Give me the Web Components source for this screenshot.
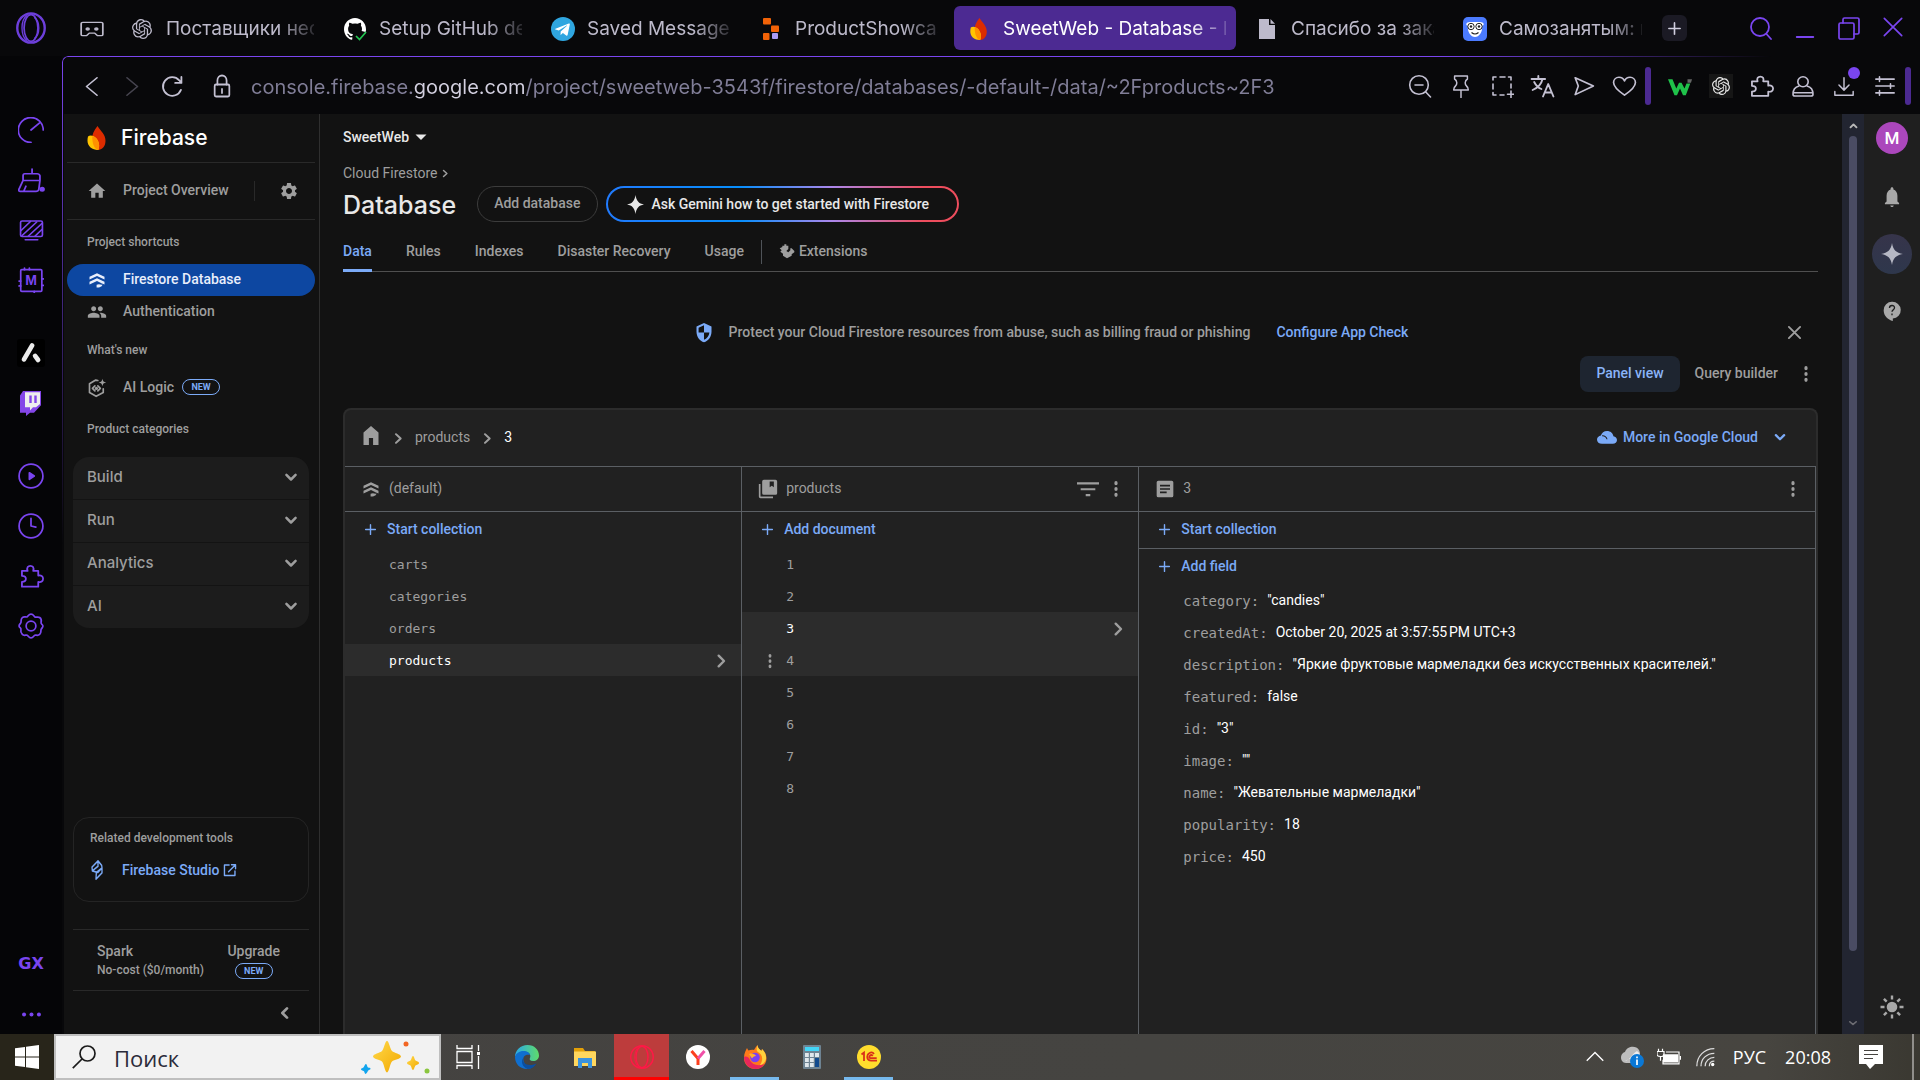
<!DOCTYPE html>
<html lang="ru">
<head>
<meta charset="utf-8">
<title>SweetWeb - Database - Data - Firebase console</title>
<style>
html,body{margin:0;height:100%;background:#08080a}
body{font-family:Roboto,"Liberation Sans",sans-serif;font-size:14px;color:#9e9e9e;overflow:hidden}
</style>
</head>
<body>
<browser-window></browser-window>
<script>
const OPENAI='<path fill="currentColor" d="M22.2819 9.8211a5.9847 5.9847 0 0 0-.5157-4.9108 6.0462 6.0462 0 0 0-6.5098-2.9A6.0651 6.0651 0 0 0 4.9807 4.1818a5.9847 5.9847 0 0 0-3.9977 2.9 6.0462 6.0462 0 0 0 .7427 7.0966 5.98 5.98 0 0 0 .511 4.9107 6.051 6.051 0 0 0 6.5146 2.9001A5.9847 5.9847 0 0 0 13.2599 24a6.0557 6.0557 0 0 0 5.7718-4.2058 5.9894 5.9894 0 0 0 3.9977-2.9001 6.0557 6.0557 0 0 0-.7475-7.0729zm-9.022 12.6081a4.4755 4.4755 0 0 1-2.8764-1.0408l.1419-.0804 4.7783-2.7582a.7948.7948 0 0 0 .3927-.6813v-6.7369l2.02 1.1686a.071.071 0 0 1 .038.052v5.5826a4.504 4.504 0 0 1-4.4945 4.4944zm-9.6607-4.1254a4.4708 4.4708 0 0 1-.5346-3.0137l.142.0852 4.783 2.7582a.7712.7712 0 0 0 .7806 0l5.8428-3.3685v2.3324a.0804.0804 0 0 1-.0332.0615L9.74 19.9502a4.4992 4.4992 0 0 1-6.1408-1.6464zM2.3408 7.8956a4.485 4.485 0 0 1 2.3655-1.9728V11.6a.7664.7664 0 0 0 .3879.6765l5.8144 3.3543-2.0201 1.1685a.0757.0757 0 0 1-.071 0l-4.8303-2.7865A4.504 4.504 0 0 1 2.3408 7.872zm16.5963 3.8558L13.1038 8.364 15.1192 7.2a.0757.0757 0 0 1 .071 0l4.8303 2.7913a4.4944 4.4944 0 0 1-.6765 8.1042v-5.6772a.79.79 0 0 0-.407-.667zm2.0107-3.0231l-.142-.0852-4.7735-2.7818a.7759.7759 0 0 0-.7854 0L9.409 9.2297V6.8974a.0662.0662 0 0 1 .0284-.0615l4.8303-2.7866a4.4992 4.4992 0 0 1 6.6802 4.66zM8.3065 12.863l-2.02-1.1638a.0804.0804 0 0 1-.038-.0567V6.0742a4.4992 4.4992 0 0 1 7.3757-3.4537l-.142.0805L8.704 5.459a.7948.7948 0 0 0-.3927.6813zm1.0976-2.3654l2.602-1.4998 2.6069 1.4998v2.9994l-2.5974 1.4997-2.6067-1.4997Z"/>';
const line=(d,w=1.6)=>`<g fill="none" stroke="currentColor" stroke-width="${w}" stroke-linecap="round" stroke-linejoin="round">${d}</g>`;
const solid=d=>`<path fill="currentColor" fill-rule="evenodd" d="${d}"/>`;
const PUZZLE='<path d="M4 7h4.500C7.500 4 9 2.500 11 2.500s3.500 1.500 2.500 4.500H18v4.200c2.500-.8 4.300.6 4.300 2.800s-1.800 3.600-4.300 2.800V21H3.500v-4.200c2.500 0 3.500-1.200 3.500-2.700s-1-2.700-3.500-2.700V7z"/>';
const FLAME='<path fill="#dd2c00" d="M12.500 1C9 5 7 9 7 13c0 6 2 10 6 10s7.500-3 7.500-8.500C20.500 9 16 6 12.500 1z"/><path fill="#ffc400" d="M3 10.500C5 9 9 9.500 11.500 12.500s3.500 7 1.700 10.500C7 23 2.500 19.500 2.500 14.500c0-1.500.1-2.800.5-4z"/><path fill="#ff9100" d="M7.300 10.300c1.700.3 3 1.100 4.200 2.200 2.500 3 3.500 7 1.700 10.500C9.500 22 7.200 18 7.300 10.300z"/>';
const FIRESTORE=solid('M3 8.200 12 4l9 4.200v3.300l-9-4.200-9 4.200zM3 14.200 12 10l9 4.200v3.300l-3-1.400-6-2.800-9 4.200zM11.500 21v-3.200c2-1.200 4-.9 5.800-.1l1.200-.4c0 2.500-3.500 3.700-7 3.700z');
const ICONS={
opera:'<g fill="none" stroke="#6d3fdb"><ellipse cx="12" cy="12" rx="10.300" ry="11" stroke-width="1.800"/><ellipse cx="12" cy="12" rx="5.200" ry="10" stroke-width="1.300"/><path d="M9 2.500C4 6 4 18 9 21.500M14.500 4c4.500 3 4.500 13 0 16" stroke-width="1"/></g>',
mask:line('<path d="M3.500 4h17q1.500 0 1.500 1.500v13q0 1.500-1.500 1.500H17l-2.500-3h-5L7 20H3.500Q2 20 2 18.500v-13Q2 4 3.500 4z"/><circle cx="8" cy="12" r="1.300" fill="currentColor"/><circle cx="16" cy="12" r="1.300" fill="currentColor"/>'),
openai:OPENAI,
github:'<path fill="#fff" d="M12 1C5.900 1 1 6 1 12.200c0 5 3.200 9.200 7.500 10.600.6.100.8-.2.800-.5v-2C6.200 21 5.600 19 5.600 19c-.5-1.300-1.200-1.600-1.200-1.600-1-.7.100-.7.100-.7 1.100.1 1.700 1.100 1.700 1.100 1 1.700 2.600 1.200 3.200.9.100-.7.400-1.200.7-1.500-2.500-.3-5-1.200-5-5.500 0-1.200.4-2.200 1.100-3-.1-.3-.5-1.500.1-3 0 0 .9-.3 3 1.100a10 10 0 0 1 5.500 0c2.100-1.400 3-1.100 3-1.100.6 1.500.2 2.700.1 3 .7.800 1.100 1.800 1.100 3 0 1-.1 1.700-.4 2.400l4 1c.3-1 .4-1.900.4-2.900C23 6 18.100 1 12 1z"/><path d="m13 19 3.500 3.500L23 15" fill="none" stroke="#23c552" stroke-width="1.700"/>',
telegram:'<circle cx="12" cy="12" r="12" fill="#2fa6e0"/><path fill="#fff" d="M4.500 11.700 17.800 6.500c.7-.2 1.200.2 1 1.100l-2.200 10.300c-.2.800-.7 1-1.400.6l-3.300-2.500-1.700 1.600c-.2.200-.4.300-.7.300l.2-3.400 6.300-5.700c.3-.3-.1-.4-.4-.2L7.800 13.500l-3.300-1c-.7-.2-.7-.6 0-.8z"/>',
replit:'<rect x="4" y="1" width="8" height="6.500" rx="1" fill="#f26207"/><rect x="12" y="8.500" width="8" height="6.500" rx="1" fill="#f26207"/><rect x="4" y="16" width="6.500" height="7" rx="1" fill="#f26207"/><rect x="13" y="16" width="6" height="6" rx="1" fill="#a99af5"/>',
flame:FLAME,
doc:'<path fill="#bdbacb" d="M4 2h10v6h6v14H4z"/><path fill="#bdbacb" d="m15.500 2 4.500 4.800h-4.500z"/>',
robot:'<rect width="24" height="24" rx="5" fill="#4b7bff"/><path fill="#fff" d="M5 9c-3-1-2-4 2-4h10c4 0 5 3 2 4 1 6-3 11-7 11S4 15 5 9z"/><circle cx="8" cy="9.500" r="3.200" fill="#fff" stroke="#222"/><circle cx="16" cy="9.500" r="3.200" fill="#fff" stroke="#222"/><circle cx="8" cy="9.500" r="1.200" fill="#222"/><circle cx="16" cy="9.500" r="1.200" fill="#222"/><path d="M8.500 15.500q3.500 3 7 0" fill="none" stroke="#222" stroke-width="1.200"/>',
plus:line('<path d="M12 3v18M3 12h18"/>',2.600),
search:line('<circle cx="11" cy="11" r="9"/><path d="m17.500 18 4.500 5"/>',1.800),
min:line('<path d="M2 21h20"/>',2),
restore:line('<rect x="2" y="7" width="15" height="16" rx="1.500"/><path d="M6 7V3.500Q6 2 7.500 2h13Q22 2 22 3.500v13q0 1.500-1.500 1.500H17"/>',1.700),
close:line('<path d="M2.500 2.500l19 19M21.500 2.500l-19 19"/>',1.800),
dismiss:line('<path d="M3 3l18 18M21 3 3 21"/>',3),
back:line('<path d="M17.500 2 6 12l11.500 10"/>',1.800),
fwd:line('<path d="M6.500 2 18 12 6.500 22"/>',1.800),
reload:line('<path d="M20.800 15.500A9.700 9.700 0 1 1 19 5.500l2 2.500M21.300 2v6.300h-6.500"/>',1.900),
lock:line('<rect x="4" y="10.500" width="16" height="12" rx="1.500"/><path d="M7 10.500V6.500a5 5 0 0 1 10 0v4M12 15v4"/>',1.900),
zoomout:line('<circle cx="11" cy="11" r="9.300"/><path d="m17.800 18 4.700 5M7 11h8"/>'),
pin:line('<path d="M5 2h14v3c-3 2-3 5-1 7 2 1.500 2 2.500 2 4H4c0-1.500 0-2.500 2-4 2-2 2-5-1-7zM12 16v7.500"/>'),
select:line('<path d="M3 6V3h3M10 3h5M18.500 3H21v3M21 10v4M3 10v5M3 18.500V21h3M10 21h4M21 17v6.500M17.500 20.300h6"/>'),
translate:line('<path d="M1.500 5h13M8 2v3M12 5c-1 5-5 9-9.500 11M4 8c2 4 4 6 7 7M12.500 22.500 17.500 10l5 12.500M14.300 18.500h6.500"/>',1.800),
send:line('<path d="M4 3 21.500 12 4 21.500l3-9.500z"/>'),
heart:line('<path d="M12 22C6 17.500 1.500 13 1.500 8.300 1.500 4.500 4 2.500 6.700 2.500c2.500 0 4.300 1.500 5.300 4 1-2.500 2.800-4 5.300-4 2.700 0 5.200 2 5.200 5.800C22.500 13 18 17.500 12 22z"/>'),
w:'<path fill="#1fc24a" d="M0 4h4.500l3.800 11L11 8h2.500l3 7 2-6h3.800l-4.500 14h-2.800L12 15l-3 8H6.500z"/><path fill="#666" d="M19.500 4H24l-1 4h-3.500z"/>',
puzzle:line(PUZZLE),
person:line('<circle cx="12" cy="7" r="5.200"/><path d="M8 11.500C4 12.500 2 15.500 2 20q0 2 2 2h16q2 0 2-2c0-4.500-2-7.500-6-8.500"/><path d="M2.500 18.500h19"/>'),
download:line('<path d="M12 3v13M6.500 11l5.500 5.500 5.500-5.500M2 18v4h20v-4"/>'),
sliders:line('<path d="M2 4.500h20M2 12h20M2 19.500h20M6 2v5M18 9.500v5M6 17v5"/>',1.700),
speed:line('<path d="M12 23.500A11.500 11.500 0 1 1 23.300 12M12 12l8.500-7"/>'),
broom:line('<path d="M12.500 1v4.500M6 5.500h11q2 0 2.500 2V12h-15V7.500q0-2 1.500-2zM4.500 12 .8 20.500q-.5 2 1.200 2h14q2 0 2.500-2L19.500 12M7 17.500l-2 5"/><circle cx="21.500" cy="20.500" r="1.600" fill="currentColor"/>'),
display:line('<rect x="1.500" y="3" width="21" height="15.500" rx="1.500"/><path d="M6 21.800h12M2 12.500 11 3.500M3 17.500 17 4M9 18 22 5.500M15.500 18 22 11.500"/>'),
chip:line('<rect x="2.500" y="2.500" width="19.500" height="20" rx="1"/><path d="M6 1v1.500M10.500 1v1.500M1 13h1.500M1 17.500h1.500M22 11h1.500M22 17h1.500M15 22.500V24"/>')+'<text x="12" y="17" text-anchor="middle" font-family="Liberation Sans" font-weight="700" font-size="13" fill="currentColor">M</text>',
alogo:'<rect width="24" height="24" rx="2.500" fill="#000"/><g stroke="#ececec" stroke-width="4" stroke-linecap="round"><path d="M13 5.500 6 17.500"/><path d="m15.500 14.500 2.600 3.500"/></g>',
twitch:'<path fill="#8446e8" d="M4 1h18v13l-7 7h-4l-4 3v-3H1V5z"/><path fill="#eee" d="M6 2h15v11l-4 3h-3l-3 3v-3H6z"/><path stroke="#8446e8" stroke-width="2.400" d="M11.500 5v7M16.500 5v7"/>',
play:line('<circle cx="12" cy="12" r="11"/><path fill="currentColor" d="m10.500 9 4.500 3-4.500 3z"/>'),
clock:line('<circle cx="12" cy="12" r="11"/><path d="M12 5v7l4.500 1"/>'),
flower:line('<circle cx="12" cy="12" r="4.500"/><path d="M12 1c2 0 2.500 1.500 3.500 2.500S18.300 3 20 4.200s1.700 3 1.300 4.500 1.700 1.800 1.700 3.300-1.300 2-1.700 3.300.400 3-1.300 4.500-3.500.3-4.500.7S14 23 12 23s-2.500-2-3.500-2.500-3 .9-4.500-.700-1.700-3-1.300-4.500S1 13.500 1 12s1.300-2 1.700-3.300-.4-3 1.300-4.500 3.500 0 4.500-.7S10 1 12 1z"/>'),
dots:'<g fill="currentColor"><circle cx="3.500" cy="12" r="2.300"/><circle cx="12" cy="12" r="2.300"/><circle cx="20.500" cy="12" r="2.300"/></g>',
home:solid('M10 20v-6h4v6h5v-8h3L12 3 2 12h3v8z'),
homefull:solid('M3 20V7.500L12 1l9 6.500V20h-6.500v-7h-5v7z'),
gear:solid('M19.140 12.940c.04-.3.06-.61.06-.94 0-.32-.02-.64-.07-.94l2.030-1.580c.18-.14.23-.41.12-.61l-1.920-3.320c-.12-.22-.37-.29-.59-.22l-2.390.96c-.5-.38-1.030-.7-1.620-.94l-.36-2.540c-.04-.24-.24-.41-.48-.41h-3.840c-.24 0-.43.17-.47.41l-.36 2.540c-.59.24-1.130.57-1.620.94l-2.390-.96c-.22-.08-.47 0-.59.22L2.740 8.870c-.12.21-.08.47.12.61l2.030 1.580c-.05.3-.09.63-.09.94s.02.64.07.94l-2.030 1.580c-.18.14-.23.41-.12.61l1.920 3.320c.12.22.37.29.59.22l2.390-.96c.5.38 1.030.7 1.620.94l.36 2.540c.05.24.24.41.48.41h3.840c.24 0 .44-.17.47-.41l.36-2.540c.59-.24 1.130-.56 1.620-.94l2.390.96c.22.08.47 0 .59-.22l1.920-3.320c.12-.22.07-.47-.12-.61l-2.010-1.580zM12 15.600c-1.980 0-3.600-1.620-3.600-3.600s1.620-3.600 3.600-3.600 3.600 1.620 3.600 3.600-1.620 3.600-3.600 3.600z'),
firestore:FIRESTORE,
people:solid('M16 11c1.660 0 2.990-1.340 2.990-3S17.660 5 16 5c-1.660 0-3 1.340-3 3s1.340 3 3 3zm-8 0c1.660 0 2.990-1.340 2.990-3S9.660 5 8 5C6.340 5 5 6.340 5 8s1.340 3 3 3zm0 2c-2.330 0-7 1.170-7 3.500V19h14v-2.500c0-2.330-4.670-3.500-7-3.500zm8 0c-.29 0-.62.02-.97.05 1.160.84 1.970 1.970 1.970 3.450V19h6v-2.500c0-2.330-4.670-3.500-7-3.500z'),
ailogic:line('<path d="M13 3 10.500 2.500 3 7v10.500l8 4.500 8.500-4.500V13"/><path d="m9.500 9.500-3 3 3 3M13 9.500l3 3-3 3"/><circle cx="11.300" cy="12.500" r="1"/>',2)+solid('M18.500 1c.5 3 1.500 4 4.500 4.500-3 .5-4 1.500-4.500 4.500-.5-3-1.500-4-4.500-4.500 3-.5 4-1.500 4.500-4.500z'),
down:line('<path d="m6.500 9.500 5.500 5.500 5.500-5.500"/>',3),
left:line('<path d="m15 5-7 7 7 7"/>',4),
right:line('<path d="m8.500 4 8 8-8 8"/>',3.600),
studio:line('<path d="m13.500 1-9 7.500L5 13l8 2 6.500-5.500-.5-3zM5 13l8.500-5.500L13.500 1M10.500 23l9-7.500V9.500L11 15z"/>',2),
external:line('<path d="M10.500 3.500h-8v18h18v-8M14.500 3h7v7M21 3.500 9.500 15"/>',2.400),
caret:solid('M6.500 9.500h11l-5.500 5.500z'),
sparkle:solid('M12 0c1.200 7.500 4.500 10.800 12 12-7.500 1.200-10.800 4.500-12 12C10.800 16.500 7.500 13.200 0 12 7.500 10.800 10.800 7.500 12 0z'),
ext:solid('M5 4h3V2h3v2h3v5l-3 3 3 2 3-3V8h2l4 4v2l-4 3v2l-7 4-6-4v-3l-4-3 2-2-3-3 4-2z'),
shield:'<path fill="#7baaf7" fill-rule="evenodd" d="M12 1 3 5v6c0 5.550 3.840 10.740 9 12 5.160-1.260 9-6.450 9-12V5zM12 3.700 5.500 6.600v5.400H12zM12 12v8.300c3.500-1.300 6-4.400 6.500-8.300z"/>',
more:solid('M12 7.500a2.500 2.500 0 1 0 0-5 2.500 2.500 0 0 0 0 5zm0 7a2.500 2.500 0 1 0 0-5 2.500 2.500 0 0 0 0 5zm0 7a2.500 2.500 0 1 0 0-5 2.500 2.500 0 0 0 0 5z'),
cloud:solid('M6 21C2.500 21 0 18.500 0 15.500c0-2.700 2-5 4.700-5.400C5.500 6.500 8.400 4 12 4c4 0 7.300 3 7.700 7 2.500.4 4.300 2.400 4.300 5 0 2.800-2.200 5-5 5z')+'<path d="M6 10.500c3-.5 5.500 1.500 6 4.500" fill="none" stroke="#212121" stroke-width="1.300"/>',
album:solid('M3 6H1v15q0 2 2 2h15v-2H3zM7 1q-2 0-2 2v14q0 2 2 2h14q2 0 2-2V3q0-2-2-2zm7 2h5v7l-2.500-2-2.500 2z'),
note:solid('M4 2q-2 0-2 2v16q0 2 2 2h16q2 0 2-2V4q0-2-2-2zm2 5h12v2H6zm0 4h12v2H6zm0 4h8v2H6z'),
filter:solid('M0 4h24v2.600H0zm4 7h16v2.600H4zm5.500 7h5v2.600h-5z'),
bell:solid('M12 23c1.300 0 2-.7 2-1.700h-4c0 1 .7 1.700 2 1.700zm6.500-6v-6.500c0-3.500-2-6-4.800-6.800V3c0-1-.7-1.700-1.700-1.700s-1.700.7-1.700 1.700v.7c-2.800.8-4.800 3.300-4.800 6.800V17L3.500 18.500V20h17v-1.500z'),
help:'<path fill="currentColor" d="M12 1a10 10 0 1 1 1 20v3c-6-2-11-6-11-13A10 10 0 0 1 12 1z"/><path d="M9 8.500c0-4 6-4 6-.5 0 2.300-3 2.500-3 5M12 15v2" fill="none" stroke="#1e1e1e" stroke-width="1.600"/>',
sun:'<circle cx="12" cy="12" r="5.300" fill="currentColor"/><path stroke="currentColor" stroke-width="2.400" d="M12 .5v4M12 19.500v4M.5 12h4M19.500 12h4M3.900 3.900l2.800 2.800M17.300 17.300l2.800 2.800M3.900 20.100l2.800-2.800M17.300 6.700l2.800-2.800"/>',
up:line('<path d="m4 16 8-9 8 9"/>',5),
win:'<path fill="#fff" d="M0 3.300 10 2v9.500H0zM11 1.800 24 0v11.500H11zM0 12.500h10V22L0 20.700zM11 12.500h13V24l-13-1.800z"/>',
wsearch:'<g fill="none" stroke="#1b1b1b" stroke-width="1.700"><circle cx="15.500" cy="8.500" r="7.500"/><path d="M10 14 .8 23.200"/></g>',
stars:'<svg viewBox="0 0 70 34" width="70" height="34"><defs><linearGradient id="g" x1="0" x2="1" y1="0" y2="1"><stop offset="0" stop-color="#ffd84a"/><stop offset="1" stop-color="#f2a900"/></linearGradient></defs><path fill="url(#g)" d="M27 1c2 0 3 8 5 10s9 3 9 5.500-7 3-9 5-3 11-5 11-3-9-5-11-9-2.500-9-5 7-3.500 9-5.500 3-10 5-10z"/><path fill="url(#g)" d="M53 16c1.200 0 1.500 3.500 2.500 4.500s3.500 1 3.500 2.500-2.500 1.500-3.500 2.500-1.300 4.500-2.500 4.500-1.500-3.500-2.500-4.500-3.500-1-3.500-2.500 2.500-1.500 3.500-2.500 1.300-4.500 2.500-4.500z"/><path fill="#12a5ee" d="M6 24c1 0 1 3 2 3.500s2.500 0 2.500 1.300-2 1-2.500 2S6.500 34 5.500 34s-.8-2.500-1.800-3S1 30.500 1 29.300s2-1 2.700-2S5 24 6 24z"/><circle cx="46" cy="4" r="2.500" fill="#f26522"/><circle cx="67" cy="31" r="2.500" fill="#8bc63f"/></svg>',
taskview:'<g fill="none" stroke="#fff" stroke-width="1.300"><path d="M1 0v3.500h15V0M1 24v-3.500h15V24M1 6.500h15v11H1zM22.500 0v6M22.500 11v13"/></g><path fill="#fff" d="M21 7h3.200v3H21z"/>',
edge:'<defs><linearGradient id="e1" x1="0" x2="1"><stop offset="0" stop-color="#2aa8e8"/><stop offset="1" stop-color="#5fdc6a"/></linearGradient></defs><path fill="url(#e1)" d="M0 12C0 5 5.500 0 12.500 0S24 5 24 10.500c0 3.500-2.500 5.500-6 5.500-3 0-4-1.500-3-3 1.500-3.500-1.500-6.500-5.500-6.500S1.500 9 0 12z"/><path fill="#0f6fd0" d="M0 12c1-4 5-6.500 9.500-6 3 .3 5 2 5.500 4-5-1-7.500 2-6.500 6 1 4.500 5.500 6 11 4.500C17 23 14.500 24 12 24 5 24 0 19 0 12z"/><path fill="#0b4fa0" d="M8.500 12.500C7 18 12 22.500 21.500 18.500 19 22.500 16 24 12.500 24 7 22 5.500 16 8.500 12.500z"/>',
folder:'<path fill="#e3a008" d="M1 3h9l2 3H22v4H1z"/><path fill="#ffd75e" d="M1 6.500h22V21H1z"/><path fill="#3b93de" d="M5 13h14v10h-4v-5H9v5H5z"/>',
operared:'<g fill="none" stroke="#ff1846"><ellipse cx="12" cy="12" rx="11.300" ry="11.300" stroke-width="1.400"/><ellipse cx="12" cy="12" rx="6" ry="10.800" stroke-width="1.400"/><path d="M8.500 1.500c-5 5-5 16 0 21" stroke-width=".8"/></g>',
yandex:'<circle cx="12" cy="12" r="12" fill="#fff"/><path d="M5.500 6 12 13.500V20" fill="none" stroke="#fc3f1d" stroke-width="3"/><path d="M18.500 6 12 13.500" stroke="#f050a8" stroke-width="3"/>',
firefox:'<path fill="#ff7a1a" d="M1 13C1 8 3 5 4 3c.5 1 1 2 1.500 2.500C7 5 9 4.500 11 5c1-1.500 2-3.500 3.500-5 0 3 2 4 4 6l.5-2c3 3 4.500 6 4.500 9.500C23.500 19 19 24 12.500 24S1 19.500 1 13z"/><path fill="#ffd23c" d="M14.500 0c0 3 2 4 4 6l.5-2c3 3 4.500 6 4 10-1 4-4 6-6 6 4-6 2-11-2-13-2-1.500-1.500-4.500-.5-7z"/><path fill="#e8275b" d="M1 12c0 7 5 12 11.500 12 4 0 7-2 9-5-6 2.500-13 1-15-5-1-2-3-3-5.500-2z"/><circle cx="12" cy="12.500" r="4.800" fill="#7b3ff2"/><path fill="#ffb02e" d="M6 9c3-1 6 0 7 2-2 0-3 1-4 2.500z"/>',
calc:'<rect x="3" width="18" height="24" rx="1" fill="#6e8392"/><rect x="5" y="2" width="14" height="4" fill="#43d5f7"/><g fill="#dfe7ec"><path d="M5 8h3.800v4H5zM10 8h3.800v4H10zM15 8h4v4h-4zM5 13h3.800v4H5zM10 13h3.800v4H10zM5 18h3.800v4H5zM10 18h3.800v4H10z"/></g><path fill="#104a8e" d="M15 13h4v9h-4z"/>',
onec:'<circle cx="12" cy="12" r="12" fill="#ffdd2d"/><g fill="none" stroke="#d9301a" stroke-width="1.800"><path d="m4.500 9.500 2.500-2v8.500M17 9c-1-1.500-3-1.800-4.500-1-3 1.500-3 6 0 7.300 1 .5 3 .4 7.500.4M15.800 10.800c-.8-.8-2-1-2.800-.2-1 1-.7 2.600.7 2.600h6"/></g>',
tchev:'<path d="m3 16 9-9 9 9" fill="none" stroke="#fff" stroke-width="1.500"/>',
onedrive:'<path fill="#bdbdbd" d="M2 16c-2-3-1-8 3-9 2-6 11-7 14-2 2 4 1 8-4 13H6c-2 0-3-1-4-2z"/><path fill="#eee" d="M5 16c4 0 7-7 12-10 3 2 4 5 3 8H9z"/><circle cx="17" cy="16" r="7" fill="#0a78d6"/><path stroke="#fff" stroke-width="1.700" d="M17 14.500V20M17 11.500v1.700"/>',
battery:'<path fill="#fff" d="M6 9h15v9H6z"/><path fill="none" stroke="#fff" stroke-width="1.200" d="M9 6.500h13v13H6V15M23.500 11v4M1.500 3v3M5.500 3v3M0 6h7v3q0 2.500-3.500 2.500T0 9zM3.500 11v5"/>',
wifi:'<g fill="none" stroke="#ddd" stroke-width="1.500"><path d="M1 23C1 11 10 2 22 2M6 23C6 14 13 7.500 22 7.500M11 23c0-6 5-10.500 11-10.500M16 23c0-3.500 2-6 6-6"/></g><circle cx="20" cy="21" r="2" fill="#fff"/>',
notif:'<path fill="#fff" d="M0 0h24v19h-8l-5 5-4-5H0z"/><path d="M5 5.500h14M5 9.500h14M5 13.500h9" stroke="#454340" stroke-width="1.200"/>'
};
const element=(name,css,html)=>customElements.define(name,class extends HTMLElement{
  constructor(){super();this.attachShadow({mode:'open'})}
  connectedCallback(){
    const t=document.createElement('template');
    t.innerHTML=`<style>:host{display:block;box-sizing:border-box}*,*::before,*::after{box-sizing:border-box}button,input{font:inherit;color:inherit;background:none;border:0;padding:0;margin:0}a{color:inherit;text-decoration:none}ul,ol,dl,dd,h1,h2,p{margin:0;padding:0;list-style:none;font-weight:inherit;font-size:inherit}${css}</style>`+(typeof html==='function'?html(this):html);
    this.shadowRoot.replaceChildren(t.content.cloneNode(true));
  }
});
const a=(el,k,d='')=>el.getAttribute(k)??d;
const ic=(n,w=24,h=w)=>`<ui-icon name="${n}" w="${w}" h="${h}"></ui-icon>`;
const btn=(n,label,w=24,h=w)=>`<button aria-label="${label}">${ic(n,w,h)}</button>`;

element('ui-icon',':host{display:inline-flex;flex:none;vertical-align:middle}svg{display:block}',el=>{
  const n=a(el,'name');
  return n==='stars'?ICONS.stars:`<svg viewBox="0 0 24 24" preserveAspectRatio="none" width="${a(el,'w')}" height="${a(el,'h')}" aria-hidden="true">${ICONS[n]}</svg>`});

element('browser-tab',`
:host{flex:0 0 202px;min-width:0;height:44px;border-radius:6px;color:#bdbacb}
:host([first]){flex-basis:207px}
:host([active]){flex-basis:282px;background:#4c2a92;color:#fff}
button{width:100%;height:100%;display:flex;align-items:center;gap:12px;padding:1px 10px 0 13px;text-align:left}
i{width:24px;display:flex;justify-content:center}
span{flex:1;min-width:0;overflow:hidden;white-space:nowrap;mask-image:linear-gradient(90deg,#000 calc(100% - 36px),#0003);line-height:28px}`,
el=>`<button role="tab"><i>${ic(a(el,'icon'),a(el,'w','24'),a(el,'h','24'))}</i><span><slot></slot></span></button>`);

element('tab-strip',`
:host{display:flex;align-items:center;height:56px;font:19px/28px Inter,"Liberation Sans",sans-serif}
.logo{flex:none;width:62px;display:flex;justify-content:center}
.mask{flex:none;width:55px;display:flex;justify-content:center;padding:2px 0 0 5px;color:#bdbacb}
nav{display:flex;gap:6px}
.add{flex:none;width:25px;height:26px;border-radius:6px;background:#1b1a24;color:#d0cede;display:flex;align-items:center;justify-content:center;margin-left:10px}
.win{margin-left:auto;display:flex;gap:20px;color:#7a45f0;padding-right:15px}
.win button{width:24px;display:flex;justify-content:center}`,
`<button class="logo" aria-label="Opera GX">${ic('opera',32,32)}</button>
<button class="mask" aria-label="Workspace">${ic('mask',26,20)}</button>
<nav role="tablist">
<browser-tab first icon="openai" w="20" h="20">Поставщики нео</browser-tab>
<browser-tab icon="github">Setup GitHub de</browser-tab>
<browser-tab icon="telegram">Saved Messages</browser-tab>
<browser-tab icon="replit">ProductShowcas</browser-tab>
<browser-tab active icon="flame" w="22" h="24">SweetWeb - Database - D</browser-tab>
<browser-tab icon="doc">Спасибо за зака</browser-tab>
<browser-tab icon="robot">Самозанятым: к</browser-tab></nav>
<button class="add" aria-label="New tab">${ic('plus',15)}</button>
<div class="win">${btn('search','Search tabs',24)}${btn('min','Minimize',20,24)}${btn('restore','Restore',24)}${btn('close','Close',22)}</div>`);

element('address-bar',`
:host{display:flex;align-items:center;height:58px;padding-top:2px;color:#c4c1d3}
.nav{display:flex;padding-left:8px}
.nav button{width:40px;height:40px;display:flex;align-items:center;justify-content:center}
.nav .dim{color:#46444f}
.nav .lock{width:48px;margin-left:6px}
label{flex:1;display:flex}
input{flex:1;min-width:0;outline:0;padding:2px 0 0 5px;font:20px/28px Inter,"Liberation Sans",sans-serif;color:transparent;background:linear-gradient(90deg,#817e98 168px,#d3d0e0 168px,#d3d0e0 278px,#817e98 278px);background-clip:text;-webkit-background-clip:text}
.tools{display:flex;align-items:center;padding-right:9px}
.tools button{width:41px;height:40px;display:flex;align-items:center;justify-content:center;position:relative}
.bar{width:6px;height:38px;border-radius:3px;background:#4c2a92}
.bar+button{margin-left:8px}
.chip{background:#161616;width:24px;height:24px;display:flex;align-items:center;justify-content:center;color:#e6e6e6}
.badge{position:absolute;right:4px;top:1px;width:12px;height:12px;border-radius:6px;background:#7a45f0}`,
`<div class="nav">${btn('back','Back',22,21)}<button class="dim" aria-label="Forward">${ic('fwd',22,21)}</button>${btn('reload','Reload',23,23)}<button class="lock" aria-label="Site information">${ic('lock',22,24)}</button></div>
<label><input aria-label="Address" value="console.firebase.google.com/project/sweetweb-3543f/firestore/databases/-default-/data/~2Fproducts~2F3"></label>
<div class="tools">${btn('zoomout','Zoom')}${btn('pin','Pin',22,24)}${btn('select','Snapshot')}${btn('translate','Translate',25,24)}${btn('send','Send',25,22)}${btn('heart','Bookmark',25,22)}
<span class="bar"></span>${btn('w','Extension',24,20)}<button aria-label="ChatGPT"><span class="chip">${ic('openai',18)}</span></button>${btn('puzzle','Extensions',27,25)}${btn('person','Profile',24,23)}<button aria-label="Downloads">${ic('download',22,22)}<span class="badge"></span></button>${btn('sliders','Easy setup',22,22)}<span class="bar"></span></div>`);

element('gx-rail',`
:host{display:flex;flex-direction:column;width:62px;flex:none;color:#7a45f0;padding-top:54px;background:#050507}
div{display:flex;flex-direction:column;gap:10px;margin-bottom:33px}
button{height:40px;display:flex;align-items:center;justify-content:center}
div:last-child{margin:auto 0 0}
.gx{font:700 16px/20px "DejaVu Sans","Liberation Sans",sans-serif}`,
`<div>${btn('speed','Speed Dial',26)}${btn('broom','GX Cleaner',27,25)}${btn('display','Wallpaper',25,24)}${btn('chip','Mods',26)}</div>
<div>${btn('alogo','Aria',28)}${btn('twitch','Twitch',24,26)}</div>
<div>${btn('play','Player',26)}${btn('clock','History',26)}${btn('puzzle','Extensions',27,27)}${btn('flower','Settings',26)}</div>
<div><button class="gx">GX</button>${btn('dots','More',21)}</div>`);

element('new-badge',`:host{display:inline-flex;align-items:center;justify-content:center;width:38px;height:16px;border:1px solid #7baaf7;border-radius:8px;color:#7baaf7;font:700 9px/14px Roboto,sans-serif}`,'NEW');

element('nav-item',`
:host{height:32px}
a{height:32px;display:flex;align-items:center;padding:0 0 2px 20px;border-radius:16px;font-weight:500;line-height:20px}
i{display:flex;justify-content:center;width:20px;margin-right:16px;padding-top:2px}
:host([active]) a{background:#0d47a1;color:#e8eefb}
::slotted(new-badge){margin-left:8px}`,
el=>`<a href="#"><i>${ic(a(el,'icon'),a(el,'s','20'))}</i><slot></slot></a>`);

element('category-list',`
ul{background:#1c1c1c;border-radius:16px;overflow:hidden}
li+li{border-top:1px solid #131313}
button{width:100%;height:42px;display:flex;align-items:center;justify-content:space-between;padding:0 8px 2px 14px;font:500 15px/20px Inter,sans-serif}`,
()=>`<ul>${['Build','Run','Analytics','AI'].map(t=>`<li><button>${t}${ic('down',20)}</button></li>`).join('')}</ul>`);

element('firebase-sidebar',`
:host{width:256px;flex:none;border-right:1px solid #2f2f2f;background:#121212;display:flex;flex-direction:column;padding:0 4px 0 3px;font-size:14px;line-height:20px}
.brand{height:49px;display:flex;align-items:center;gap:12px;border-bottom:1px solid #292929;padding:0 0 1px 18px;color:#fff;font:500 21px/26px Inter,sans-serif}
.overview{height:57px;display:flex;align-items:center;border-bottom:1px solid #292929}
.overview nav-item{flex:1}
.overview button{border-left:1px solid #292929;height:20px;width:61px;padding-left:7px;display:flex;align-items:center;justify-content:center}
h2{font-size:12px;font-weight:500;line-height:44px;padding-left:20px}
h2.cat{line-height:50px}
category-list,.tools,.plan,.foot{margin:0 6px}
category-list{margin-top:3px}
.tools{margin-top:auto;height:85px;border:1px solid #242424;border-radius:16px;padding:10px 15px;font-size:12px;display:flex;flex-direction:column;gap:12px}
.tools p{padding-left:1px;font-weight:500}
.tools a{color:#7baaf7;font-weight:500;font-size:14px;display:flex;align-items:center;gap:3px}
.tools a ui-icon:first-child{margin-right:14px}
.plan{margin-top:27px;height:62px;border:solid #292929;border-width:1px 0;display:flex;justify-content:space-between;padding:11px 29px 0 24px;font-size:12px;font-weight:500}
.plan b{font-weight:500;font-size:14px;display:block}
.plan p{line-height:18px}
.up{display:flex;flex-direction:column;align-items:center;gap:2px}
.up b{line-height:20px}
.foot{height:43px;display:flex;justify-content:flex-end;padding-right:16px}
.foot button{display:flex;align-items:center}`,
`<div class="brand">${ic('flame',24,26)}Firebase</div>
<div class="overview"><nav-item icon="home">Project Overview</nav-item><button aria-label="Settings">${ic('gear',20)}</button></div>
<h2>Project shortcuts</h2>
<nav-item active icon="firestore">Firestore Database</nav-item><nav-item icon="people" s="20">Authentication</nav-item>
<h2>What's new</h2><nav-item icon="ailogic">AI Logic<new-badge></new-badge></nav-item>
<h2 class="cat">Product categories</h2><category-list></category-list>
<div class="tools"><p>Related development tools</p><a href="#">${ic('studio',16,20)}Firebase Studio${ic('external',14)}</a></div>
<div class="plan"><div><b>Spark</b><p>No-cost ($0/month)</p></div><div class="up"><b>Upgrade</b><new-badge></new-badge></div></div>
<div class="foot"><button aria-label="Collapse">${ic('left',16)}</button></div>`);

element('link-action',`:host{display:block}button{display:flex;align-items:center;height:35px;color:#7baaf7;font-weight:500;line-height:20px;padding:0 0 1px 19px;gap:10px}`,
()=>`<button>${ic('plus',13)}<slot></slot></button>`);

element('panel-column',`
:host{display:flex;flex-direction:column;min-width:0;border-right:1px solid #5b5f64}
header{height:45px;display:flex;align-items:center;border-bottom:1px solid #5b5f64;padding:0 14px 1px 16px}
h2{flex:1;margin-left:8px;padding-bottom:1px;font-size:14px;line-height:20px}
header button{display:flex;justify-content:center;width:16px}
header button:first-of-type:not(:last-of-type){width:22px;margin-right:9px}`,
el=>`<header>${ic(a(el,'icon'),a(el,'s','20'))}<h2>${a(el,'heading')}</h2>${el.hasAttribute('filter')?btn('filter','Filter',22,20):''}${el.hasAttribute('menu')?btn('more','Menu',16,20):''}</header><slot></slot>`);

element('list-row',`
:host{font:13px/20px "DejaVu Sans Mono","Liberation Mono",monospace}
button{width:100%;height:32px;display:flex;align-items:center;padding:2px 12px 0 16px;text-align:left}
i{width:28px;display:flex;padding-left:5px}
span{flex:1}
:host([on]),:host([hover]){background:#2c2c2c}
:host([on]) span{color:#fff}`,
el=>`<button><i>${el.hasAttribute('hover')?ic('more',14,18):''}</i><span><slot></slot></span>${el.hasAttribute('on')?ic('right',16,16):''}</button>`);

element('doc-fields',`
dl{display:grid}
div{display:flex;height:32px;align-items:center;padding-left:44px;white-space:nowrap}
dt{font:14px/20px "DejaVu Sans Mono","Liberation Mono",monospace;padding-top:2px}
dd{margin-left:8px;color:#fff;line-height:20px}`,
()=>`<dl>${[['category','"candies"'],['createdAt','October 20, 2025 at 3:57:55\u202fPM UTC+3'],['description','"Яркие фруктовые мармеладки без искусственных красителей."'],['featured','false'],['id','"3"'],['image','""'],['name','"Жевательные мармеладки"'],['popularity','18'],['price','450']].map(([k,v])=>`<div><dt>${k}:</dt><dd>${v}</dd></div>`).join('')}</dl>`);

element('data-panel',`
:host{display:flex;flex-direction:column;flex:1;min-height:0;border:2px solid #2c2c2c;border-bottom:0;border-radius:8px 8px 0 0;background:#212121;overflow:hidden}
.crumbs{height:57px;display:flex;align-items:center;border-bottom:1px solid #5b5f64;padding:0 27px 2px 16px;line-height:20px}
ol{display:flex;align-items:center;gap:10px;flex:1}
ol b{font-weight:400;color:#fff}
.crumbs>button{color:#7baaf7;font-weight:500;display:flex;align-items:center;gap:6px}
.crumbs>button ui-icon:last-child{margin-left:7px}
.cols{flex:1;min-height:0;display:grid;grid-template-columns:27fr 27fr 46fr}
.start{border-bottom:1px solid #5b5f64;height:37px}
.list{padding-top:1px}`,
`<div class="crumbs"><ol><li>${ic('homefull',20,24)}</li><li>${ic('right',14,13)}</li><li><a href="#">products</a></li><li>${ic('right',14,13)}</li><li><b>3</b></li></ol><button>${ic('cloud',20,18)}More in Google Cloud${ic('down',18)}</button></div>
<div class="cols">
<panel-column icon="firestore" heading="(default)"><link-action>Start collection</link-action><div class="list"><list-row>carts</list-row><list-row>categories</list-row><list-row>orders</list-row><list-row on>products</list-row></div></panel-column>
<panel-column icon="album" heading="products" filter menu><link-action>Add document</link-action><div class="list"><list-row>1</list-row><list-row>2</list-row><list-row on>3</list-row><list-row hover>4</list-row><list-row>5</list-row><list-row>6</list-row><list-row>7</list-row><list-row>8</list-row></div></panel-column>
<panel-column icon="note" heading="3" menu><link-action class="start">Start collection</link-action><link-action>Add field</link-action><doc-fields></doc-fields></panel-column>
</div>`);

element('firestore-page',`
:host{flex:1;min-width:0;display:flex;flex-direction:column;background:#121212;padding:0 24px 0 23px;line-height:20px}
.project{height:46px;color:#e8e8e8;font-weight:500;display:flex;align-items:center}
.bc{height:26px;display:flex;align-items:center;gap:3px}
.title{display:flex;align-items:center;height:36px}
h1{font:500 25px/36px Inter,sans-serif;color:#e8e8e8;margin-right:21px;padding-top:2px}
.title button{height:36px;border-radius:18px;border:1px solid #3c3c3c;padding:0 17px 2px 16px;font-weight:500;margin-right:8px}
.title .ask{display:flex;align-items:center;gap:7px;padding:0 28px 0 19px;color:#e8e8e8;border:2px solid transparent;background:linear-gradient(#121212,#121212) padding-box,linear-gradient(90deg,#217bfe,#078efb 38%,#ac87eb 64%,#ee4d5d 90%) border-box}
.tabs{height:50px;padding-top:8px;display:flex;gap:34px;border-bottom:1px solid #4f4f4f;font-weight:500}
.tabs a{display:flex;align-items:center;gap:4px;height:42px}
.tabs a.on{color:#7baaf7;border-bottom:3px solid #7baaf7;padding-top:3px;border-radius:2px 2px 0 0}
.tabs .sep{width:1px;height:24px;background:#4f5358;margin:10px -17px 0}
.notice{margin-top:44px;height:32px;display:flex;align-items:center;font-weight:500}
.notice p{margin:0 26px 0 15px;font-weight:500}
.notice a{color:#7baaf7}
.notice .mid{flex:1;display:flex;align-items:center;justify-content:center;padding-right:28px}
.notice button{margin-right:16px;display:flex}
.view{display:flex;align-items:center;justify-content:flex-end;margin:8px 0 16px;font-weight:500}
.view button{height:36px;padding:0 15px 2px;border-radius:8px;display:flex;align-items:center}
.view .on{background:#1e2530;color:#8ab4f8;padding:0 16px 2px}
.view .m{padding:0 4px 0 5px}`,
`<button class="project">SweetWeb${ic('caret',24)}</button>
<a class="bc" href="#">Cloud Firestore${ic('right',10,9)}</a>
<div class="title"><h1>Database</h1><button>Add database</button><button class="ask">${ic('sparkle',17,19)}Ask Gemini how to get started with Firestore</button></div>
<nav class="tabs"><a class="on" href="#">Data</a><a href="#">Rules</a><a href="#">Indexes</a><a href="#">Disaster Recovery</a><a href="#">Usage</a><span class="sep"></span><a href="#">${ic('ext',16)}Extensions</a></nav>
<div class="notice"><div class="mid">${ic('shield',20,21)}<p>Protect your Cloud Firestore resources from abuse, such as billing fraud or phishing</p><a href="#">Configure App Check</a></div>${btn('dismiss','Dismiss',15)}</div>
<div class="view"><button class="on">Panel view</button><button>Query builder</button><button class="m" aria-label="More">${ic('more',16,20)}</button></div>
<data-panel></data-panel>`);

element('page-scrollbar',`
:host{width:22px;flex:none;background:#222531;display:flex;flex-direction:column;align-items:center;padding:8px 0 5px;color:#b8b8b8}
.thumb{width:8px;border-radius:4px;background:#4a4c63;flex:1;margin:6px 0 66px}
ui-icon:last-child{color:#6c6c72}`,
`${ic('up',9,8)}<span class="thumb"></span>${ic('down',14,12)}`);

element('utility-rail',`
:host{width:56px;flex:none;background:#1f1f1f;color:#a8a8a8;display:flex;flex-direction:column;align-items:center;gap:17px;padding:4px 0 7px}
button{width:40px;height:40px;border-radius:20px;display:flex;align-items:center;justify-content:center}
.av{width:32px;height:32px;margin:4px 0 6px;background:#ab47bc;color:#fff;font:500 17px/32px Roboto,sans-serif}
.sp{background:linear-gradient(#36344a,#2e374c);color:#b6b8c4}
button:last-child{margin-top:auto}`,
`<button class="av">M</button>${btn('bell','Notifications',20,22)}<button class="sp" aria-label="Gemini">${ic('sparkle',22)}</button>${btn('help','Help',20)}${btn('sun','Theme')}`);

element('task-bar',`
:host{height:46px;flex:none;display:flex;background:linear-gradient(90deg,#444240,#454441 60%,#474540 92%,#3a3831);color:#fff;font-family:"Open Sans","Noto Sans",sans-serif}
.start{width:54px;background:#28251a;display:flex;align-items:center;justify-content:center}
.find{width:387px;border:2px solid #bfbfbf;background:#f2f2f2;display:flex;align-items:center;padding:0 9px 0 16px}
.find input{flex:1;min-width:0;margin-left:18px;padding-top:2px;font-size:22px;line-height:30px}
.find input::placeholder{color:#2b2b3a;opacity:1}
.apps{display:flex}
.apps button{width:57px;display:flex;align-items:center;justify-content:center;border-bottom:3px solid transparent;padding-top:3px}
.apps button:nth-child(1){width:53px}
.apps button:nth-child(2){width:66px}
.apps button:nth-child(3){width:50px;margin-right:4px}
.apps .red{background:#bd3c3c;border-color:#f00;width:55px}
.apps .run{border-image:linear-gradient(90deg,transparent 7px,#76b9ed 7px,#76b9ed 50px,transparent 50px) 3}
.tray{margin-left:auto;display:flex;align-items:center;font-size:18px;line-height:24px}
.tray button{width:37px;height:46px;display:flex;align-items:center;justify-content:center}
.tray .t{width:auto;padding:0 22px 0 8px}
.tray .l{width:auto;padding:0 11px 0 8px}
.tray .n{width:50px;margin-left:-7px}
.tray .show{width:8px;border-left:2px solid #908e8a;margin-left:16px}`,
`<button class="start" aria-label="Start">${ic('win')}</button>
<label class="find">${ic('wsearch')}<input type="text" aria-label="Поиск" placeholder="Поиск">${ic('stars')}</label>
<div class="apps">${btn('taskview','Task view')}${btn('edge','Edge')}${btn('folder','Explorer')}<button class="red" aria-label="Opera GX">${ic('operared')}</button>${btn('yandex','Yandex')}<button class="run" aria-label="Firefox">${ic('firefox')}</button>${btn('calc','Calculator')}<button class="run" aria-label="1C">${ic('onec')}</button></div>
<div class="tray">${btn('tchev','Hidden icons',22)}${btn('onedrive','OneDrive')}${btn('battery','Battery',24,22)}${btn('wifi','Network',20)}<button class="l">РУС</button><button class="t">20:08</button><button class="n" aria-label="Notifications">${ic('notif')}</button><button class="show" aria-label="Show desktop"></button></div>`);

element('browser-window',`
:host{display:flex;flex-direction:column;height:100vh;background:#08080a}
.body{flex:1;min-height:0;display:flex}
.frame{flex:1;min-width:0;display:flex;flex-direction:column;position:relative;padding-left:2px}
.frame::before{content:"";position:absolute;inset:0;pointer-events:none;border:0 solid #7a45f0;border-top-width:1px;border-left-width:1px;border-radius:6px 0 0 0;mask-image:linear-gradient(90deg,#000 74%,transparent 92%),linear-gradient(#000,transparent 50%);mask-composite:intersect}
.page{flex:1;min-height:0;display:flex}`,
`<tab-strip></tab-strip>
<div class="body"><gx-rail></gx-rail><div class="frame"><address-bar></address-bar><main class="page"><firebase-sidebar></firebase-sidebar><firestore-page></firestore-page><page-scrollbar></page-scrollbar><utility-rail></utility-rail></main></div></div>
<task-bar></task-bar>`);
</script>
</body>
</html>
